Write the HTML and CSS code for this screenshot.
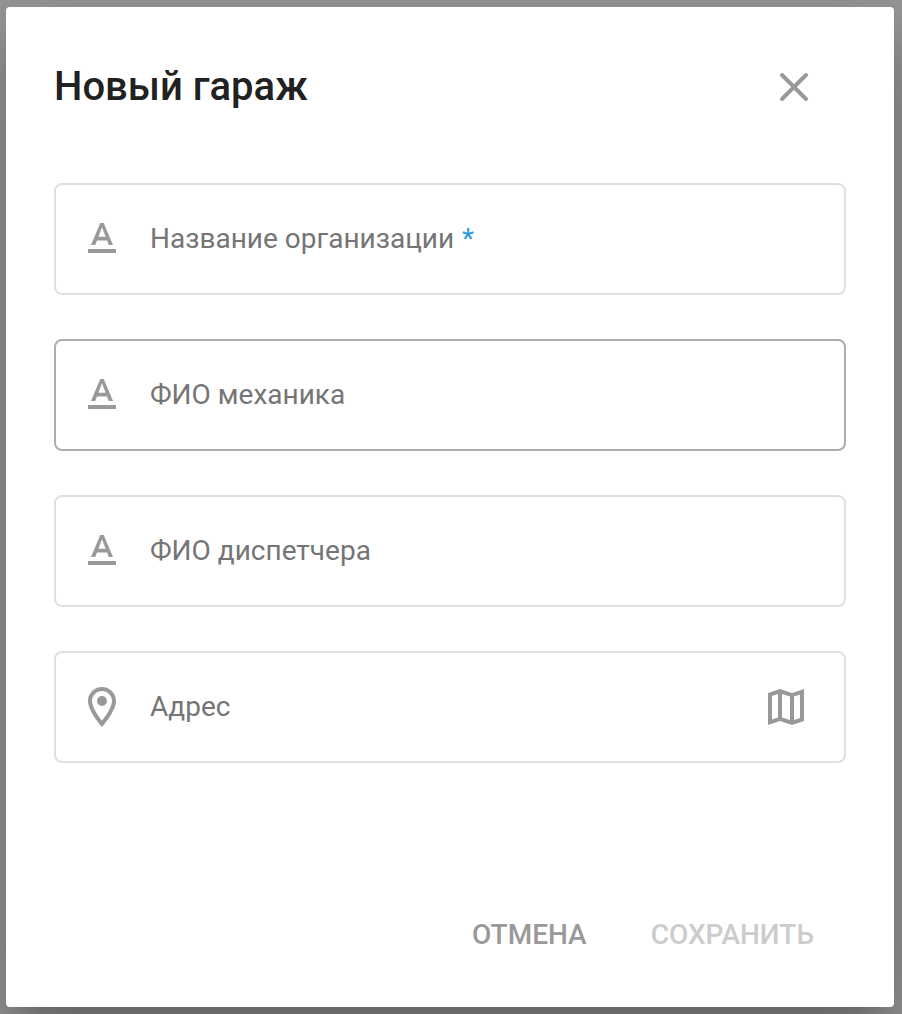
FILE: index.html
```html
<!DOCTYPE html>
<html lang="ru">
<head>
<meta charset="utf-8">
<title>Новый гараж</title>
<link rel="stylesheet" href="styles.css">
</head>
<body>
<main class="dialog">
  <header class="header">
    <h1 class="title">Новый гараж</h1>
    <button class="close" aria-label="Закрыть">
      <svg class="icon" viewBox="0 0 24 24"><path d="M6 6l12 12M18 6L6 18" fill="none" stroke="currentColor" stroke-width="2" stroke-linecap="round"/></svg>
    </button>
  </header>
  <form class="fields">
    <div class="field">
      <svg class="icon" viewBox="0 0 24 24"><path d="M5 17h14v2H5zM11.150 4h1.700l4.650 11h-2.100l-.9-2.300h-5L8.600 15H6.500zM12 6.100L10.200 10.900h3.600z"/></svg>
      <span class="label">Название организации <span class="required">*</span></span>
    </div>
    <div class="field field-hover">
      <svg class="icon" viewBox="0 0 24 24"><path d="M5 17h14v2H5zM11.150 4h1.700l4.650 11h-2.100l-.9-2.300h-5L8.600 15H6.500zM12 6.100L10.200 10.900h3.600z"/></svg>
      <span class="label">ФИО механика</span>
    </div>
    <div class="field">
      <svg class="icon" viewBox="0 0 24 24"><path d="M5 17h14v2H5zM11.150 4h1.700l4.650 11h-2.100l-.9-2.300h-5L8.600 15H6.500zM12 6.100L10.200 10.900h3.600z"/></svg>
      <span class="label">ФИО диспетчера</span>
    </div>
    <div class="field">
      <svg class="icon" viewBox="0 0 24 24"><path d="M12 2C8.130 2 5 5.130 5 9c0 5.250 7 13 7 13s7-7.750 7-13c0-3.870-3.130-7-7-7zM7 9c0-2.760 2.240-5 5-5s5 2.240 5 5c0 2.880-2.880 7.190-5 9.880C9.920 16.210 7 11.850 7 9z"/><circle cx="12" cy="9" r="2.500"/></svg>
      <span class="label">Адрес</span>
      <svg class="icon" viewBox="0 0 24 24"><path d="M3 5l6-2 6 2 6-2v16l-6 2-6-2-6 2zM5 6.450v11.770l3-1.010V5.450zM10 5.450v11.750l4 1.350V6.790zM16 6.790v11.760l3-1V5.780z"/></svg>
    </div>
  </form>
  <footer class="actions">
    <button class="button">ОТМЕНА</button>
    <button class="button" disabled>СОХРАНИТЬ</button>
  </footer>
</main>
</body>
</html>
```
FILE: styles.css
```css
* {
  box-sizing: border-box;
}

body {
  margin: 0;
  height: 1014px;
  padding: 7px 8px 7px 6px;
  overflow: hidden;
  background: #999;
  font-family: Roboto, sans-serif;
}

.dialog {
  display: flex;
  flex-direction: column;
  height: 1000px;
  padding: 48px;
  border-radius: 4px;
  background: #fff;
  box-shadow: 0 22px 30px -14px rgba(0, 0, 0, .2), 0 48px 76px 6px rgba(0, 0, 0, .14), 0 18px 92px 16px rgba(0, 0, 0, .12);
}

.header {
  display: flex;
  align-items: center;
  justify-content: space-between;
  height: 64px;
  padding-right: 28px;
}

.title {
  margin: 0;
  color: #212121;
  font-size: 40px;
  font-weight: 500;
  line-height: 64px;
}

.close {
  display: flex;
  padding: 0;
  border: 0;
  background: none;
}

.icon {
  flex: none;
  width: 48px;
  height: 48px;
  color: #999;
  fill: currentColor;
  fill-rule: evenodd;
}

.fields {
  display: grid;
  gap: 44px;
  margin-top: 64px;
}

.field {
  display: flex;
  align-items: center;
  gap: 24px;
  height: 112px;
  padding: 0 34px 0 22px;
  border: 2px solid #e0e0e0;
  border-radius: 8px;
}

.field-hover {
  border-color: #adadad;
}

.label {
  flex: 1;
  color: #757575;
  font-size: 28px;
  line-height: 32px;
}

.required {
  margin-left: 1px;
  color: #2d9cdb;
}

.actions {
  display: flex;
  justify-content: flex-end;
  gap: 32px;
  margin-top: auto;
  padding-right: 16px;
}

.button {
  height: 48px;
  padding: 0 16px;
  border: 0;
  background: none;
  color: #999;
  font: 500 28px/48px Roboto, sans-serif;
}

.button:disabled {
  color: #ccc;
}
```
